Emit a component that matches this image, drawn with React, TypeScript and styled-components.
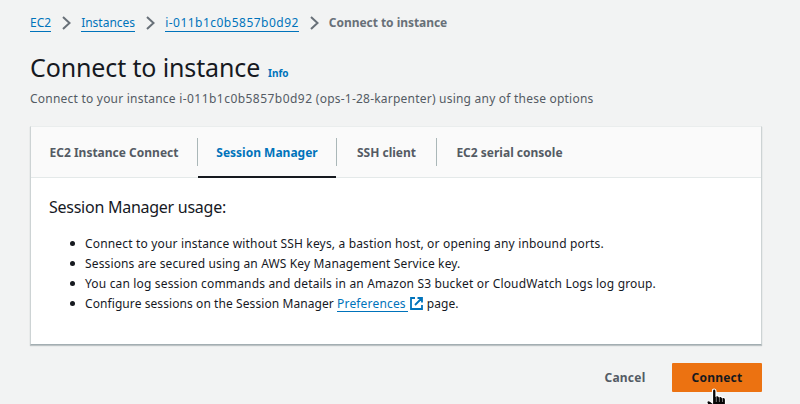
import React from "react";
import styled, { createGlobalStyle } from "styled-components";

const Global = createGlobalStyle`
  * { box-sizing: border-box; }
  body { margin: 0; background: #f2f3f3; color: #16191f; font-family: "Noto Sans", "Open Sans", sans-serif; overflow: hidden; }
`;
const Page = styled.main`
  position: relative;
  height: 404px;
  padding: 14px 38px 0 30px;
  overflow: hidden;
`;
const Breadcrumbs = styled.nav`
  display: flex;
  align-items: center;
  height: 20px;
  font-size: 12px;
  line-height: 20px;
  color: #687078;
  white-space: nowrap;
`;
const Crumb = styled.a<{ $spacing?: number }>`
  height: 18px;
  margin-top: -2px;
  color: #0073bb;
  line-height: 17px;
  letter-spacing: ${p => p.$spacing ?? 0}px;
  border-bottom: 1px solid #0073bb;
`;
const ChevronIcon = styled.svg`
  width: 9px;
  height: 14px;
  margin: -2px 10px 0 11px;
  flex: none;
  fill: none;
  stroke: #687078;
  stroke-width: 2;
`;
const Current = styled.span`
  margin-top: -2px;
  font-weight: 700;
  letter-spacing: -0.05px;
`;
const Heading = styled.header`
  display: flex;
  align-items: baseline;
  gap: 8px;
  height: 36px;
  margin-top: 15px;
  white-space: nowrap;
`;
const Title = styled.h1`
  margin: 0;
  font-size: 25px;
  font-weight: 400;
  line-height: 36px;
  letter-spacing: -0.13px;
`;
const Info = styled.a`
  font-size: 10px;
  font-weight: 700;
  color: #0073bb;
`;
const Description = styled.p`
  margin: 5px 0 0;
  font-size: 12px;
  line-height: 18px;
  letter-spacing: 0.22px;
  color: #545b64;
  white-space: nowrap;
`;
const InstanceId = styled.span`letter-spacing: 0.46px;`;
const Panel = styled.section`
  width: 732px;
  height: 219px;
  margin-top: 18px;
  background: #fff;
  border: 1px solid #eaeded;
  border-left-color: #cdd3d4;
  border-right-color: #cdd3d4;
  border-bottom-color: #a3aeb2;
  box-shadow: 0 1px 1px #001c2438;
`;
const Tabs = styled.div`
  display: flex;
  height: 51px;
  background: #fafafa;
  border-bottom: 1px solid #e4e9e9;
`;
const Tab = styled.button<{ $width: number; $active?: boolean }>`
  display: flex;
  align-items: center;
  justify-content: center;
  width: ${p => p.$width}px;
  height: 50px;
  padding: 2px 0 2px;
  border: 0;
  background: none;
  box-shadow: ${p => (p.$active ? "inset 0 -1px #16191f, 0 1px #16191f" : "none")};
  font: 700 12px "Noto Sans", sans-serif;
  white-space: nowrap;
  color: ${p => (p.$active ? "#0073bb" : "#545b64")};
`;
const Divider = styled.span`
  width: 1px;
  height: 28px;
  margin: 11px 0 0;
  background: #aab7b8;
  flex: none;
`;
const Body = styled.div`padding: 19px 18px;`;
const Subhead = styled.h2`
  margin: 0;
  font-size: 16px;
  font-weight: 400;
  line-height: 20px;
  letter-spacing: -0.26px;
`;
const List = styled.ul`
  margin: 17px 0 0;
  padding: 0 0 0 21px;
  list-style: none;
  font-size: 12px;
  line-height: 20px;
  white-space: nowrap;
`;
const Item = styled.li<{ $spacing?: number }>`
  height: 20px;
  letter-spacing: ${p => p.$spacing ?? 0.165}px;
  &::before {
    content: "";
    display: inline-block;
    width: 5px;
    height: 5px;
    margin-right: 10px;
    border-radius: 50%;
    background: #16191f;
    vertical-align: 2px;
  }
`;
const TextLink = styled.a`
  display: inline-block;
  height: 17px;
  padding-right: 2px;
  line-height: 17px;
  letter-spacing: 0.17px;
  color: #0073bb;
  border-bottom: 1px solid #0073bb;
`;
const ExternalIcon = styled.svg`
  width: 13px;
  height: 13px;
  margin: 0 4px 0 2px;
  vertical-align: -2px;
  fill: none;
  stroke: #0073bb;
  stroke-width: 1.8;
`;
const Actions = styled.footer`
  display: flex;
  justify-content: flex-end;
  margin-top: 18px;
`;
const Button = styled.button<{ $primary?: boolean }>`
  width: ${p => (p.$primary ? 90 : 94)}px;
  height: 29px;
  padding: 0;
  border: 0;
  border-radius: 1px;
  background: ${p => (p.$primary ? "#ec7211" : "transparent")};
  color: ${p => (p.$primary ? "#16191f" : "#545b64")};
  font: 700 12px "Noto Sans", sans-serif;
  letter-spacing: 0.2px;
`;
const Pointer = styled.svg`
  position: absolute;
  left: 705px;
  top: 387px;
  width: 24px;
  height: 26px;
`;

const Chevron = () => (
  <ChevronIcon viewBox="0 0 9 14"><path d="M1 1 7.5 7 1 13" /></ChevronIcon>
);

export default function App() {
  return (
    <>
      <Global />
      <Page>
        <Breadcrumbs>
          <Crumb>EC2</Crumb><Chevron />
          <Crumb>Instances</Crumb><Chevron />
          <Crumb $spacing={0.48}>i-011b1c0b5857b0d92</Crumb><Chevron />
          <Current>Connect to instance</Current>
        </Breadcrumbs>
        <Heading><Title>Connect to instance</Title><Info>Info</Info></Heading>
        <Description>
          Connect to your instance <InstanceId>i-011b1c0b5857b0d92</InstanceId> (ops-1-28-karpenter) using any of these options
        </Description>
        <Panel>
          <Tabs>
            <Tab $width={166}>EC2 Instance Connect</Tab><Divider />
            <Tab $width={138} $active>Session Manager</Tab><Divider />
            <Tab $width={99}>SSH client</Tab><Divider />
            <Tab $width={145}>EC2 serial console</Tab>
          </Tabs>
          <Body>
            <Subhead>Session Manager usage:</Subhead>
            <List>
              <Item>Connect to your instance without SSH keys, a bastion host, or opening any inbound ports.</Item>
              <Item $spacing={0.14}>Sessions are secured using an AWS Key Management Service key.</Item>
              <Item>You can log session commands and details in an Amazon S3 bucket or CloudWatch Logs log group.</Item>
              <Item $spacing={0.08}>
                Configure sessions on the Session Manager <TextLink>Preferences</TextLink>
                <ExternalIcon viewBox="0 0 13 13"><path d="M5 1H1v11h11V8M7.5 1H12v4.5M12 1 5 8" /></ExternalIcon>
                page.
              </Item>
            </List>
          </Body>
        </Panel>
        <Actions><Button>Cancel</Button><Button $primary>Connect</Button></Actions>
        <Pointer viewBox="0 0 24 26">
          <path d="M7.5 14V4q0-2 1.7-2T11 4v5q2-1 3.2.8 2-1 3 .8 3-.7 3.3 2V26H7l-4-8q-2-3-.5-4t5 2z" fill="#050505" stroke="#fff" strokeWidth="1.2" />
          <path d="M11.3 9v6M14.4 10v5M17.5 11v4" stroke="#aaa" strokeWidth=".7" />
        </Pointer>
      </Page>
    </>
  );
}
